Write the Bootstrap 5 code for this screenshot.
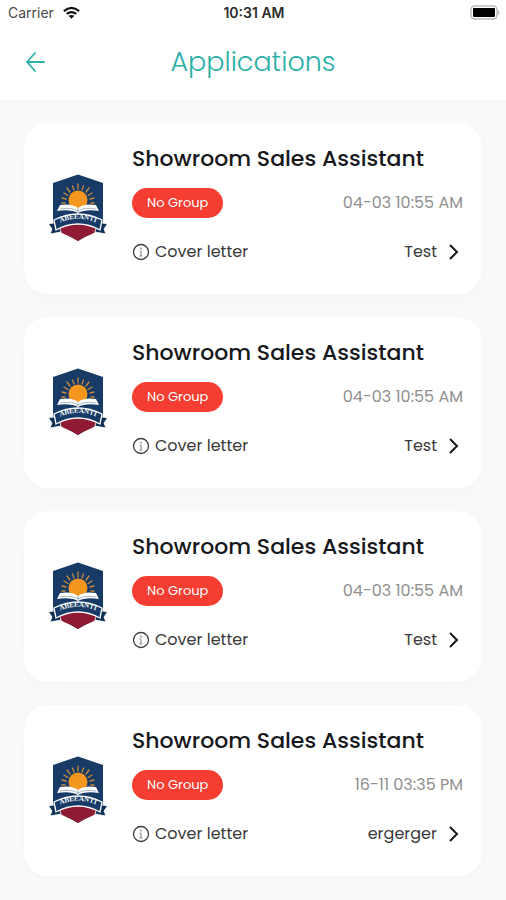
<!DOCTYPE html>
<html lang="en">
<head>
<meta charset="utf-8">
<meta name="viewport" content="width=device-width, initial-scale=1">
<title>Applications</title>
<link href="https://cdn.jsdelivr.net/npm/bootstrap@5.3.0/dist/css/bootstrap.min.css" rel="stylesheet">
<style>
  body { background: #f9f9fb; color: #17181c; font-family: Poppins, Inter, "Open Sans", sans-serif; }
  .app-top { background: #fff; height: 100px; }
  .status { font-family: Inter, "Liberation Sans", sans-serif; font-size: 14px; line-height: 26px; padding: 0 6px 0 8px; }
  .status > * { flex: 1 1 0; }
  .carrier { color: #4a4a4a; }
  .clock { font-weight: 600; color: #2c2c2c; }
  .title-bar { height: 72px; padding: 0 24px; color: #2bb0a8; }
  .side { width: 24px; }
  .back { color: inherit; line-height: 1; }
  .page-title { font-size: 27px; line-height: 36px; font-weight: 300; }
  .app-list { padding: 23px 24px; gap: 23px; }
  .app-card { border: 0; border-radius: 24px; background: #fff; box-shadow: 0 4px 12px rgba(30, 30, 60, .02); padding: 21px 19px 30px 24px; }
  .crest { width: 60px; height: 68px; margin: 8px 24px 0 0; }
  .job { font-size: 22px; line-height: 30px; font-weight: 500; margin-bottom: 14px; }
  .group-pill { background: #f63d31; color: #fff; font-size: 13px; line-height: 30px; padding: 0 15px; font-weight: 400; }
  .stamp { color: #8f8f8f; font-size: 16px; line-height: 30px; font-weight: 400; }
  .letter-row { margin-top: 22px; font-size: 16px; line-height: 24px; font-weight: 400; color: #3a3a3a; }
  .letter-row a { color: inherit; }
  .letter-label { gap: 5px; }
</style>
</head>
<body>
<svg class="d-none" aria-hidden="true">
  <defs><path id="ribbon-line" d="M8 50.500 Q30 39 52 50.500"/></defs>
  <symbol id="crest" viewBox="0 0 60 68">
    <path d="M30 .5 L55 9 V46 C55 56 41 60 30 67 C19 60 5 56 5 46 V9Z" fill="#173b66"/>
    <path d="M6 52 Q30 44 54 52 C50 59 39 61 30 67 C21 61 10 59 6 52Z" fill="#8f1a33"/>
    <g stroke="#c9893c" stroke-width="1.300" stroke-linecap="round">
      <path d="M30 10v5M24.500 12l1.500 4M35.500 12l-1.500 4M19 14l3 4M41 14l-3 4M16 19l4 2.500M44 19l-4 2.500M14 24l4 1M46 24l-4 1M14 29h3M46 29h-3"/>
    </g>
    <circle cx="30" cy="26" r="9.500" fill="#f5971f"/>
    <path d="M12 31 Q24 29 30 34 Q36 29 48 31 L51 37 Q37 35 30 39 Q23 35 9 37Z" fill="#fff"/>
    <path d="M30 34v4M12 35q12-2 18 2 6-4 18-2" fill="none" stroke="#8296ad" stroke-width=".7"/>
    <path d="M10 48 L.5 50 4 55 2 60 13 58ZM50 48l9.500 2-3.500 5 2 5-11-2Z" fill="#102f55" stroke="#fff" stroke-width=".8"/>
    <path d="M6 46 Q30 34 54 46 L52 56 Q30 44 8 56Z" fill="#173b66" stroke="#fff" stroke-width="1.300"/>
    <text font-family="Liberation Serif, serif" font-size="7" font-weight="700" fill="#fff" text-anchor="middle"><textPath href="#ribbon-line" startOffset="50%">ABEEANTI</textPath></text>
  </symbol>
  <symbol id="info" viewBox="0 0 18 18">
    <circle cx="9" cy="9" r="7.500" fill="none" stroke="#404040" stroke-width="1.300"/>
    <path d="M9 8v5M7.700 8H9M7.500 13h3" fill="none" stroke="#888" stroke-width="1.100"/>
    <circle cx="9" cy="5.500" r=".9" fill="#888"/>
  </symbol>
  <symbol id="next" viewBox="0 0 18 18">
    <path d="M5 2l7 7-7 7" fill="none" stroke="#17181c" stroke-width="2"/>
  </symbol>
</svg>

<header class="app-top">
  <div class="status d-flex align-items-center">
    <div class="carrier d-flex align-items-center gap-2">Carrier
      <svg width="19" height="14" viewBox="0 0 20 14" aria-label="Wi-Fi">
        <path d="M2 5Q10-2 18 5M5 8Q10 4 15 8" fill="none" stroke="#111" stroke-width="2.300"/>
        <path d="M7 10Q10 8 13 10L10 13Z" fill="#111"/>
      </svg>
    </div>
    <div class="clock text-center">10:31 AM</div>
    <div class="d-flex justify-content-end">
      <svg width="30" height="16" viewBox="0 0 30 16" aria-label="Battery full">
        <rect x="1" y="1" width="26" height="13" rx="3.500" fill="#fff" stroke="#bcbcbc" stroke-width="1.500"/>
        <rect x="3" y="3" width="22" height="9" rx="1" fill="#000"/>
        <path d="M28 5q3 2.500 0 5Z" fill="#bcbcbc"/>
      </svg>
    </div>
  </div>
  <div class="title-bar d-flex align-items-center justify-content-between">
    <button type="button" class="back side btn p-0 border-0" aria-label="Back">
      <svg width="22" height="22" viewBox="0 0 22 22" fill="none" stroke="#2bb0a8" stroke-width="1.800" stroke-linecap="round" stroke-linejoin="round"><path d="M19 11H2M10 2L2 11l8 9"/></svg>
    </button>
    <h1 class="page-title m-0">Applications</h1>
    <span class="side"></span>
  </div>
</header>

<main class="app-list d-flex flex-column">
  <article class="app-card d-flex align-items-center">
    <svg class="crest flex-shrink-0" role="img" aria-label="School crest"><use href="#crest"/></svg>
    <div class="flex-grow-1">
      <h2 class="job">Showroom Sales Assistant</h2>
      <div class="d-flex justify-content-between"><span class="group-pill rounded-pill">No Group</span><time class="stamp">04-03 10:55 AM</time></div>
      <div class="letter-row d-flex justify-content-between">
        <span class="letter-label d-flex align-items-center"><svg width="18" height="18"><use href="#info"/></svg>Cover letter</span>
        <a href="#" class="d-flex align-items-center gap-2 text-decoration-none">Test<svg width="18" height="18"><use href="#next"/></svg></a>
      </div>
    </div>
  </article>
  <article class="app-card d-flex align-items-center">
    <svg class="crest flex-shrink-0" role="img" aria-label="School crest"><use href="#crest"/></svg>
    <div class="flex-grow-1">
      <h2 class="job">Showroom Sales Assistant</h2>
      <div class="d-flex justify-content-between"><span class="group-pill rounded-pill">No Group</span><time class="stamp">04-03 10:55 AM</time></div>
      <div class="letter-row d-flex justify-content-between">
        <span class="letter-label d-flex align-items-center"><svg width="18" height="18"><use href="#info"/></svg>Cover letter</span>
        <a href="#" class="d-flex align-items-center gap-2 text-decoration-none">Test<svg width="18" height="18"><use href="#next"/></svg></a>
      </div>
    </div>
  </article>
  <article class="app-card d-flex align-items-center">
    <svg class="crest flex-shrink-0" role="img" aria-label="School crest"><use href="#crest"/></svg>
    <div class="flex-grow-1">
      <h2 class="job">Showroom Sales Assistant</h2>
      <div class="d-flex justify-content-between"><span class="group-pill rounded-pill">No Group</span><time class="stamp">04-03 10:55 AM</time></div>
      <div class="letter-row d-flex justify-content-between">
        <span class="letter-label d-flex align-items-center"><svg width="18" height="18"><use href="#info"/></svg>Cover letter</span>
        <a href="#" class="d-flex align-items-center gap-2 text-decoration-none">Test<svg width="18" height="18"><use href="#next"/></svg></a>
      </div>
    </div>
  </article>
  <article class="app-card d-flex align-items-center">
    <svg class="crest flex-shrink-0" role="img" aria-label="School crest"><use href="#crest"/></svg>
    <div class="flex-grow-1">
      <h2 class="job">Showroom Sales Assistant</h2>
      <div class="d-flex justify-content-between"><span class="group-pill rounded-pill">No Group</span><time class="stamp">16-11 03:35 PM</time></div>
      <div class="letter-row d-flex justify-content-between">
        <span class="letter-label d-flex align-items-center"><svg width="18" height="18"><use href="#info"/></svg>Cover letter</span>
        <a href="#" class="d-flex align-items-center gap-2 text-decoration-none">ergerger<svg width="18" height="18"><use href="#next"/></svg></a>
      </div>
    </div>
  </article>
</main>
<script src="https://cdn.jsdelivr.net/npm/bootstrap@5.3.0/dist/js/bootstrap.bundle.min.js"></script>
</body>
</html>
